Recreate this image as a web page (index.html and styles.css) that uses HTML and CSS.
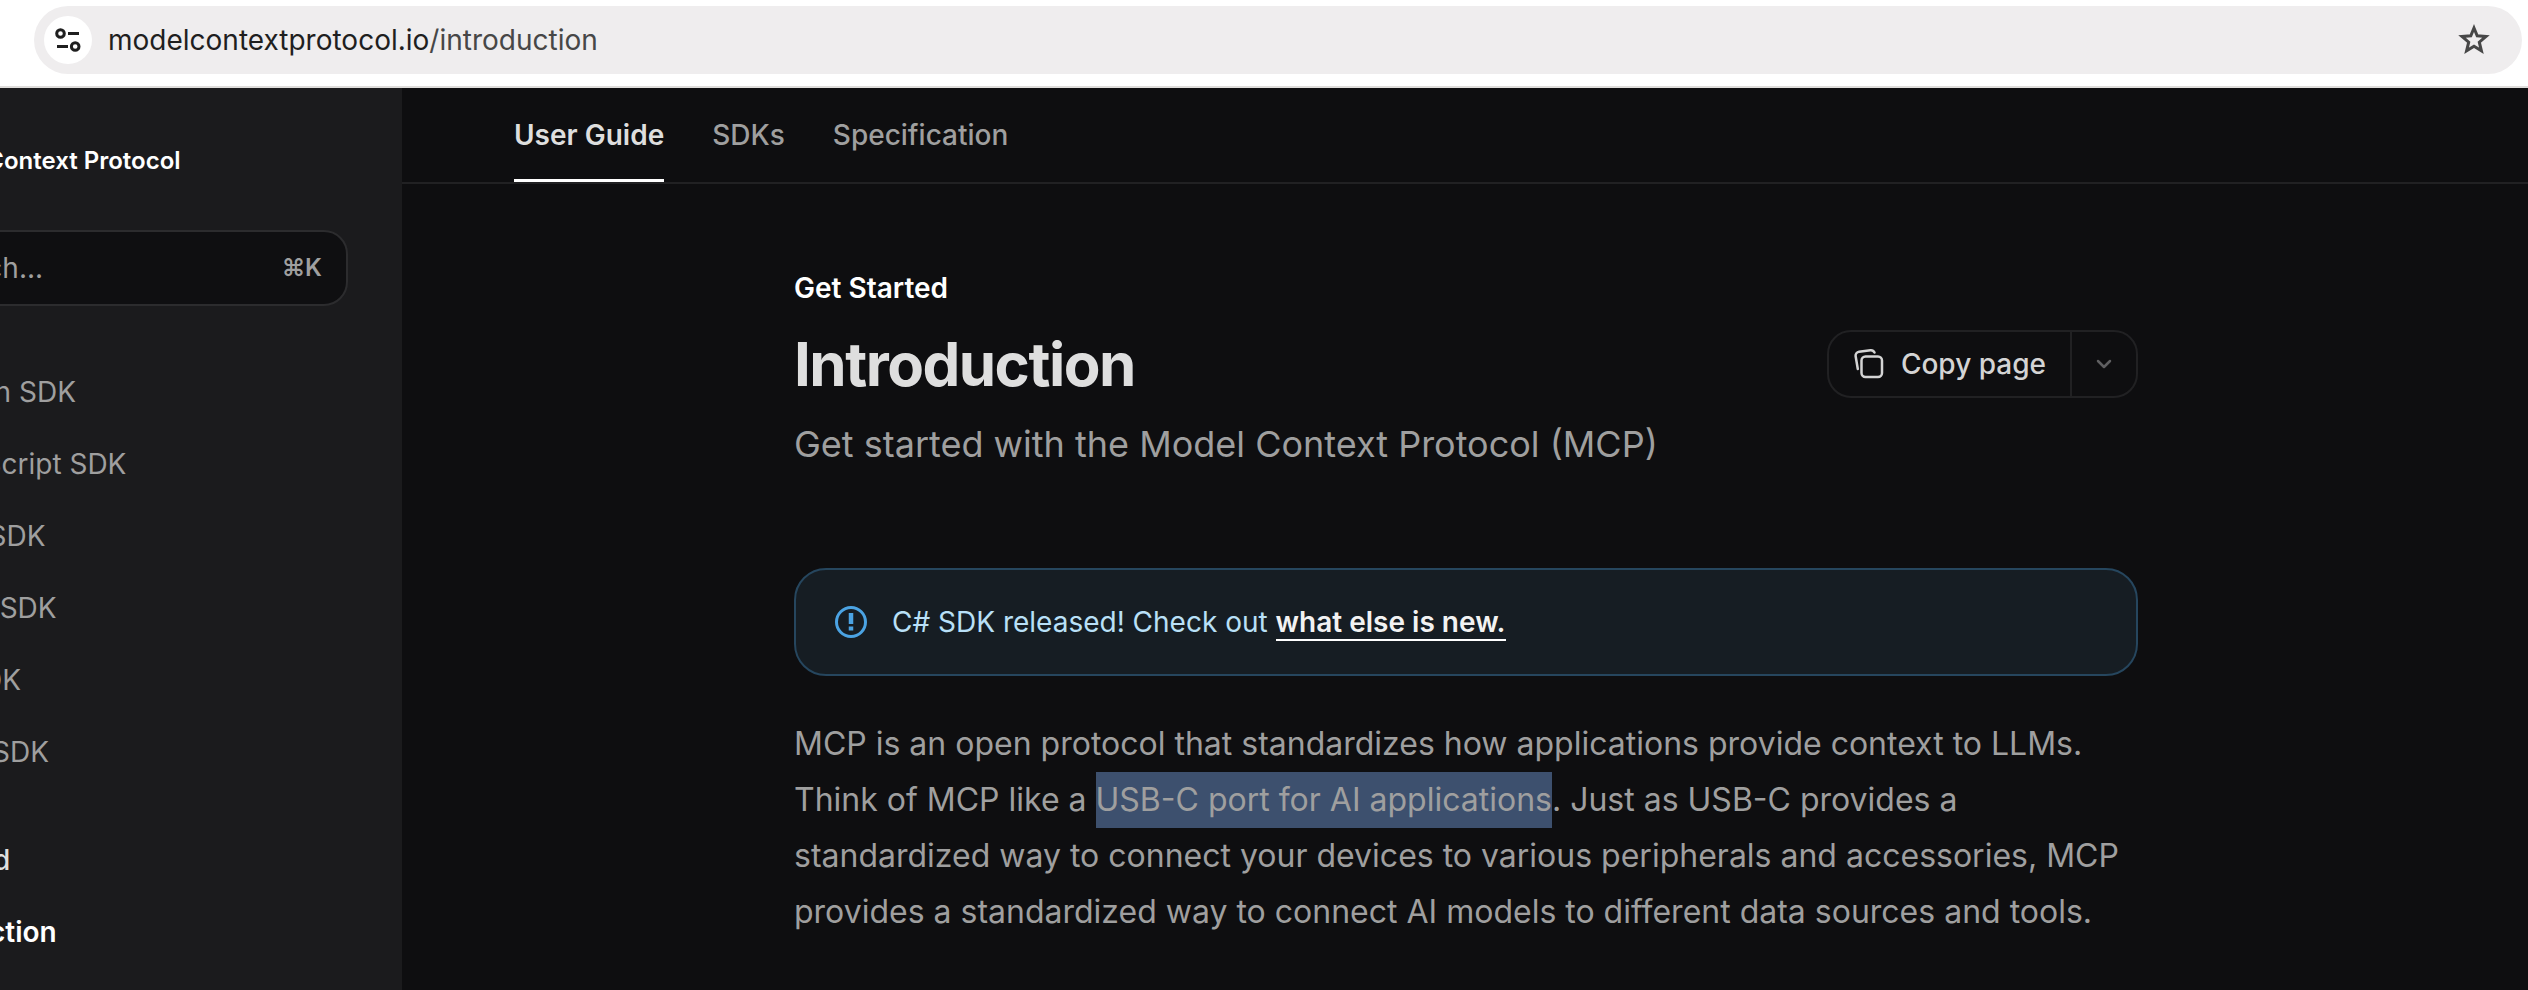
FILE: index.html
```
<!DOCTYPE html>
<html lang="en">
<head>
    <meta charset="UTF-8">
    <meta name="viewport" content="width=device-width, initial-scale=1.0">
    <title>Introduction - Model Context Protocol</title>
    <link rel="stylesheet" href="styles.css">
</head>
<body>
    <div class="toolbar">
        <div class="address-bar">
            <button type="button" class="site-info" aria-label="View site information">
                <svg width="48" height="48" viewBox="0 0 48 48" fill="none" stroke="#1f1f1f" stroke-width="3">
                    <circle cx="16.500" cy="17.500" r="3.800"/>
                    <path d="M24 17.500h11"/>
                    <path d="M13 30.500h11"/>
                    <circle cx="31.200" cy="30.500" r="3.800"/>
                </svg>
            </button>
            <p class="url">modelcontextprotocol.io<span class="url-path">/introduction</span></p>
            <button type="button" class="bookmark" aria-label="Bookmark this tab">
                <svg width="32" height="32" viewBox="0 0 32 32" fill="none" stroke="#474747" stroke-width="3">
                    <path d="M16 4l3.200 7.800 8.800.700-6.700 5.700 2.100 8.600-7.400-4.600-7.400 4.600 2.100-8.600-6.700-5.700 8.800-.7z"/>
                </svg>
            </button>
        </div>
    </div>
    <div class="layout">
        <aside class="sidebar">
            <div class="sidebar-inner">
                <a class="brand" href="#">Model Context Protocol</a>
                <button type="button" class="search">
                    <span>Search...</span>
                    <span class="shortcut">⌘K</span>
                </button>
                <ul class="sdk-list">
                    <li><a href="#">Python SDK</a></li>
                    <li><a href="#">TypeScript SDK</a></li>
                    <li><a href="#">Java SDK</a></li>
                    <li><a href="#">Kotlin SDK</a></li>
                    <li><a href="#">C# SDK</a></li>
                    <li><a href="#">Swift SDK</a></li>
                </ul>
                <h2 class="group-title">Get Started</h2>
                <ul class="page-list">
                    <li><a class="active" href="#">Introduction</a></li>
                </ul>
            </div>
        </aside>
        <div class="main">
            <nav class="tabs">
                <a class="tab active" href="#">User Guide</a>
                <a class="tab" href="#">SDKs</a>
                <a class="tab" href="#">Specification</a>
            </nav>
            <main class="content">
                <p class="eyebrow">Get Started</p>
                <div class="title-row">
                    <h1>Introduction</h1>
                    <div class="copy-group">
                        <button type="button" class="copy">
                            <svg width="32" height="32" viewBox="0 0 32 32" fill="none" stroke="#d4d4d4" stroke-width="2.500" stroke-linecap="round" stroke-linejoin="round">
                                <rect x="8.500" y="8.500" width="20.500" height="20.500" rx="4"/>
                                <path d="M4.800 21L2.600 8a4 4 0 0 1 3.400-4.300L17.500 2.200a4 4 0 0 1 4 2.300"/>
                            </svg>
                            Copy page
                        </button>
                        <button type="button" class="copy-more" aria-label="More actions">
                            <svg width="16" height="10" viewBox="0 0 16 10" fill="none" stroke="#5f5f61" stroke-width="2.500" stroke-linecap="round" stroke-linejoin="round">
                                <path d="M2 2l6 6 6-6"/>
                            </svg>
                        </button>
                    </div>
                </div>
                <p class="subtitle">Get started with the Model Context Protocol (MCP)</p>
                <div class="callout">
                    <svg width="34" height="34" viewBox="0 0 34 34" fill="none" stroke="#4ba3e3">
                        <circle cx="17" cy="17" r="14.500" stroke-width="3"/>
                        <path d="M17 8v11M17 21.500v4" stroke-width="4.500"/>
                    </svg>
                    <p>C# SDK released! Check out <a href="#">what else is new.</a></p>
                </div>
                <p class="lead">MCP is an open protocol that standardizes how applications provide context to LLMs. Think of MCP like a <mark>USB-C port for AI applications</mark>. Just as USB-C provides a standardized way to connect your devices to various peripherals and accessories, MCP provides a standardized way to connect AI models to different data sources and tools.</p>
            </main>
        </div>
    </div>
</body>
</html>
```

FILE: styles.css
```
* {
    box-sizing: border-box;
}
body {
    display: flex;
    flex-direction: column;
    min-height: 100vh;
    margin: 0;
    background: #0e0e10;
    color: #9f9f9f;
    font-family: Inter, "Liberation Sans", sans-serif;
    font-size: 28px;
    line-height: 40px;
}
h1, h2, p, ul {
    margin: 0;
    padding: 0;
}
ul {
    list-style: none;
}
a {
    color: inherit;
    text-decoration: none;
}
button {
    padding: 0;
    border: none;
    background: none;
    color: inherit;
    font: inherit;
    cursor: pointer;
}
svg {
    display: block;
    flex-shrink: 0;
}

/* Browser bar */
.toolbar {
    padding: 6px 6px 12px 34px;
    background: #fff;
    border-bottom: 2px solid #dfdddb;
}
.address-bar {
    display: flex;
    align-items: center;
    height: 68px;
    padding: 0 32px 0 10px;
    border-radius: 34px;
    background: #efedee;
}
.site-info {
    border-radius: 50%;
    background: #fff;
}
.url {
    flex: 1;
    margin-left: 16px;
    color: #1f1f1f;
}
.url-path {
    color: #474747;
}

.layout {
    display: flex;
    flex: 1;
}

/* Sidebar */
.sidebar {
    display: flex;
    justify-content: flex-end;
    width: 402px;
    overflow: hidden;
    background: #1b1b1d;
}
.sidebar-inner {
    flex-shrink: 0;
    width: 576px;
    padding: 53px 54px 0 32px;
}
.brand {
    display: block;
    padding-left: 50px;
    color: #fff;
    font-size: 24px;
    font-weight: 600;
}
.search {
    display: flex;
    align-items: center;
    justify-content: space-between;
    width: 100%;
    height: 76px;
    margin-top: 49px;
    padding: 0 24px 0 66px;
    border: 2px solid #2c2c2e;
    border-radius: 24px;
    background: #0f0f11;
}
.shortcut {
    font-size: 24px;
    font-weight: 600;
}
.sdk-list {
    margin-top: 50px;
    padding-left: 60px;
}
.sdk-list a, .page-list a {
    display: block;
    padding: 16px 0;
}
.group-title {
    margin-top: 52px;
    color: #dedede;
    font-size: 28px;
    font-weight: 500;
}
.page-list {
    margin-top: 16px;
    padding-left: 34px;
}
.page-list .active {
    color: #fff;
    font-weight: 600;
}

/* Main column */
.main {
    flex: 1;
}
.tabs {
    display: flex;
    gap: 48px;
    height: 96px;
    padding-left: 112px;
    border-bottom: 2px solid #212123;
    font-weight: 500;
}
.tab {
    padding: 27px 0;
}
.tab.active {
    border-bottom: 3px solid #fff;
    color: #dedede;
    font-weight: 600;
}
.content {
    max-width: 1344px;
    margin-left: 392px;
    padding-top: 84px;
}
.eyebrow {
    color: #fff;
    font-weight: 600;
}
.title-row {
    display: flex;
    align-items: center;
    justify-content: space-between;
    margin-top: 20px;
}
h1 {
    color: #dedede;
    font-size: 60px;
    font-weight: 700;
    line-height: 72px;
    letter-spacing: -0.025em;
}
.copy-group {
    display: flex;
    height: 68px;
    border: 2px solid #212123;
    border-radius: 24px;
}
.copy {
    display: flex;
    align-items: center;
    gap: 16px;
    padding: 0 24px;
    color: #d4d4d4;
    font-weight: 500;
}
.copy-more {
    padding: 0 24px;
    border-left: 2px solid #212123;
}
.subtitle {
    margin-top: 16px;
    font-size: 36px;
    line-height: 56px;
}
.callout {
    display: flex;
    align-items: center;
    gap: 24px;
    margin-top: 96px;
    padding: 32px 38px;
    border: 2px solid #26465e;
    border-radius: 32px;
    background: #161d23;
    color: #b9e0f7;
}
.callout a {
    border-bottom: 2px solid #fff;
    color: #f2f2f2;
    font-weight: 600;
}
.lead {
    margin-top: 40px;
    font-size: 32px;
    line-height: 56px;
}
.lead mark {
    display: inline-block;
    background: #3d506e;
    color: inherit;
}
```
